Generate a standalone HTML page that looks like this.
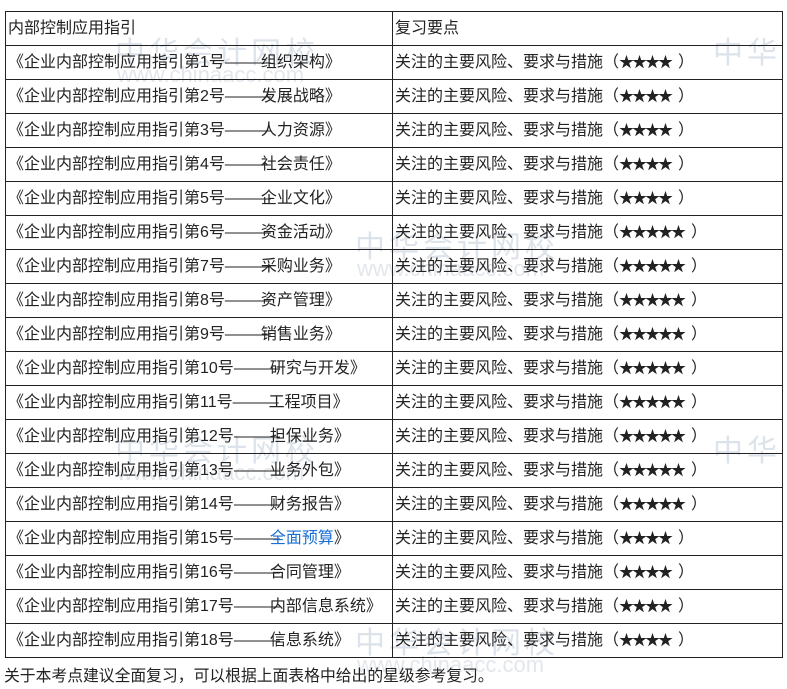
<!DOCTYPE html>
<html><head><meta charset="utf-8"><style>
body{margin:0;background:#fff;width:787px;height:689px;overflow:hidden;position:relative;font-family:"Liberation Sans","Noto Sans CJK SC",sans-serif;color:#222;}
table{position:absolute;left:5px;top:11px;border-collapse:collapse;width:778px;table-layout:fixed;}
td{border:1px solid #222;height:33px;padding:0 0 0 2px;font-size:16px;white-space:nowrap;line-height:33px;overflow:hidden;}
td.a{width:384px;}
.d{letter-spacing:-1px;display:inline-block;width:36px;}
.s{font-size:15px;letter-spacing:-2px;margin-right:7px;line-height:1;}
.wm{position:absolute;color:#dde3ea;font-size:30px;letter-spacing:4px;}
.wm2{position:absolute;color:#e3e7ec;font-size:22px;}
.foot{position:absolute;left:4px;top:663px;font-size:15.8px;}
</style></head><body>
<div class="wm" style="left:115px;top:28px">中华会计网校</div>
<div class="wm2" style="left:117px;top:62px">www.chinaacc.com</div>
<div class="wm" style="left:713px;top:28px">中华</div>
<div class="wm" style="left:355px;top:222px">中华会计网校</div>
<div class="wm2" style="left:357px;top:256px">www.chinaacc.com</div>
<div class="wm" style="left:115px;top:426px">中华会计网校</div>
<div class="wm2" style="left:117px;top:460px">www.chinaacc.com</div>
<div class="wm" style="left:713px;top:426px">中华</div>
<div class="wm" style="left:355px;top:618px">中华会计网校</div>
<div class="wm2" style="left:357px;top:652px">www.chinaacc.com</div>
<table>
<tr><td class="a">内部控制应用指引</td><td>复习要点</td></tr>
<tr><td>《企业内部控制应用指引第1号<span class="d">———</span>组织架构》</td><td>关注的主要风险、要求与措施（<span class="s">★★★★</span>）</td></tr>
<tr><td>《企业内部控制应用指引第2号<span class="d">———</span>发展战略》</td><td>关注的主要风险、要求与措施（<span class="s">★★★★</span>）</td></tr>
<tr><td>《企业内部控制应用指引第3号<span class="d">———</span>人力资源》</td><td>关注的主要风险、要求与措施（<span class="s">★★★★</span>）</td></tr>
<tr><td>《企业内部控制应用指引第4号<span class="d">———</span>社会责任》</td><td>关注的主要风险、要求与措施（<span class="s">★★★★</span>）</td></tr>
<tr><td>《企业内部控制应用指引第5号<span class="d">———</span>企业文化》</td><td>关注的主要风险、要求与措施（<span class="s">★★★★</span>）</td></tr>
<tr><td>《企业内部控制应用指引第6号<span class="d">———</span>资金活动》</td><td>关注的主要风险、要求与措施（<span class="s">★★★★★</span>）</td></tr>
<tr><td>《企业内部控制应用指引第7号<span class="d">———</span>采购业务》</td><td>关注的主要风险、要求与措施（<span class="s">★★★★★</span>）</td></tr>
<tr><td>《企业内部控制应用指引第8号<span class="d">———</span>资产管理》</td><td>关注的主要风险、要求与措施（<span class="s">★★★★★</span>）</td></tr>
<tr><td>《企业内部控制应用指引第9号<span class="d">———</span>销售业务》</td><td>关注的主要风险、要求与措施（<span class="s">★★★★★</span>）</td></tr>
<tr><td>《企业内部控制应用指引第10号<span class="d">———</span>研究与开发》</td><td>关注的主要风险、要求与措施（<span class="s">★★★★★</span>）</td></tr>
<tr><td>《企业内部控制应用指引第11号<span class="d">———</span>工程项目》</td><td>关注的主要风险、要求与措施（<span class="s">★★★★★</span>）</td></tr>
<tr><td>《企业内部控制应用指引第12号<span class="d">———</span>担保业务》</td><td>关注的主要风险、要求与措施（<span class="s">★★★★★</span>）</td></tr>
<tr><td>《企业内部控制应用指引第13号<span class="d">———</span>业务外包》</td><td>关注的主要风险、要求与措施（<span class="s">★★★★★</span>）</td></tr>
<tr><td>《企业内部控制应用指引第14号<span class="d">———</span>财务报告》</td><td>关注的主要风险、要求与措施（<span class="s">★★★★★</span>）</td></tr>
<tr><td>《企业内部控制应用指引第15号<span class="d">———</span><span style="color:#1a6fd6">全面预算</span>》</td><td>关注的主要风险、要求与措施（<span class="s">★★★★</span>）</td></tr>
<tr><td>《企业内部控制应用指引第16号<span class="d">———</span>合同管理》</td><td>关注的主要风险、要求与措施（<span class="s">★★★★</span>）</td></tr>
<tr><td>《企业内部控制应用指引第17号<span class="d">———</span>内部信息系统》</td><td>关注的主要风险、要求与措施（<span class="s">★★★★</span>）</td></tr>
<tr><td>《企业内部控制应用指引第18号<span class="d">———</span>信息系统》</td><td>关注的主要风险、要求与措施（<span class="s">★★★★</span>）</td></tr>
</table>
<div class="foot">关于本考点建议全面复习，可以根据上面表格中给出的星级参考复习。</div>
</body></html>
